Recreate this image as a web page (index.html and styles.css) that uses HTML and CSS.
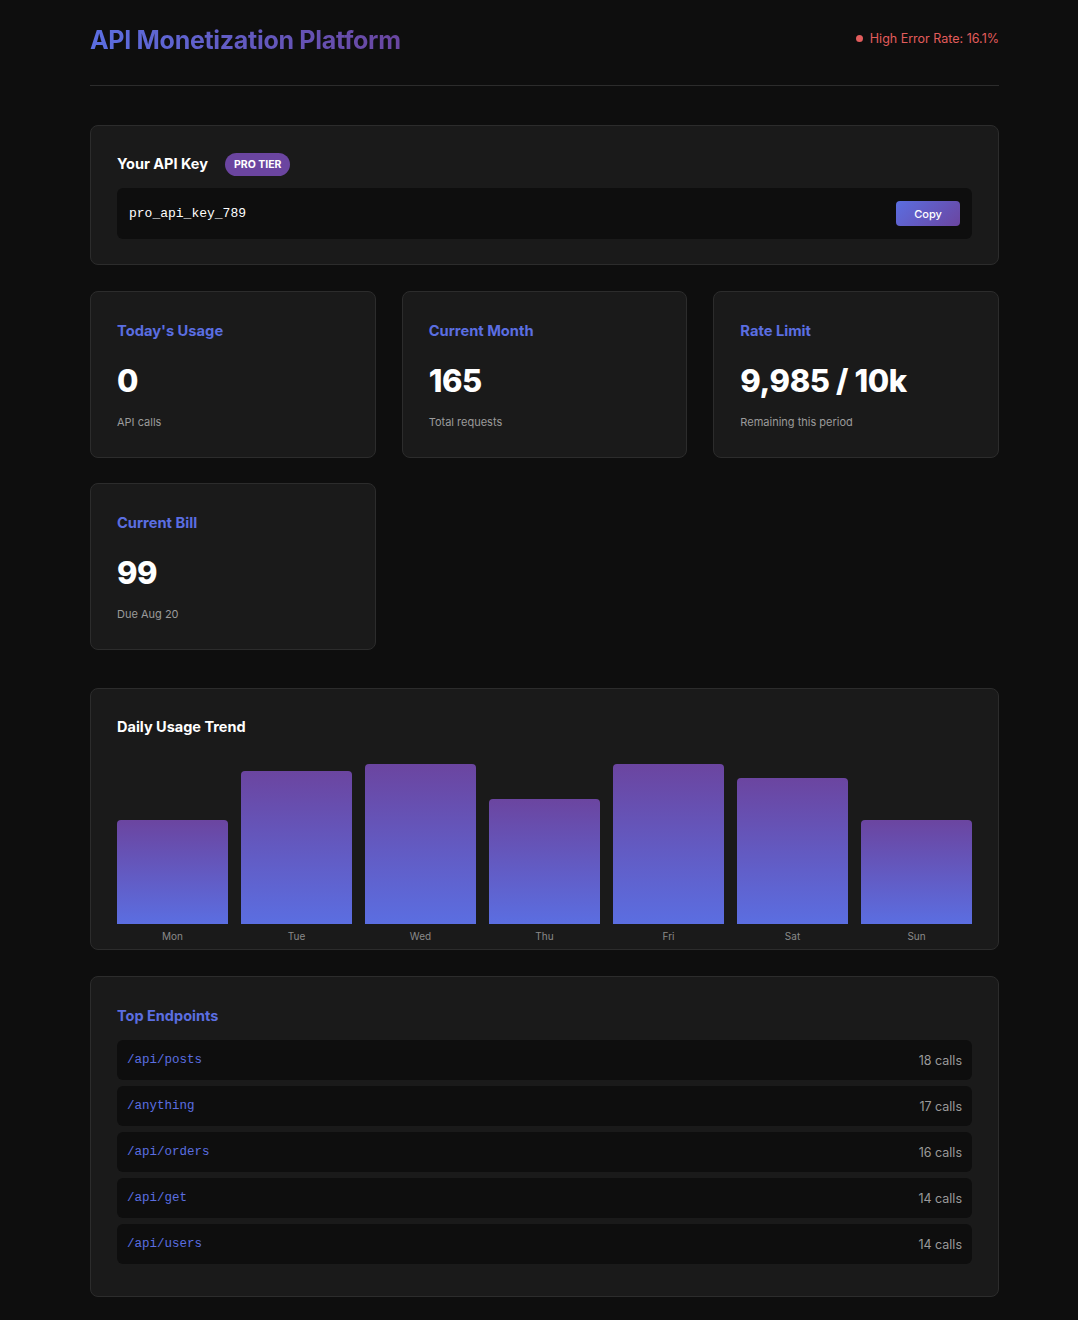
FILE: index.html
```html
<!DOCTYPE html>
<html lang="en">
<head>
<meta charset="utf-8">
<title>API Monetization Platform</title>
<link rel="stylesheet" href="styles.css">
</head>
<body>
<div class="container">
  <header class="header">
    <h1 class="brand">API Monetization Platform</h1>
    <div class="alert"><span class="dot"></span>High Error Rate: 16.1%</div>
  </header>

  <section class="card key-card">
    <div class="key-head">
      <h2 class="card-title white">Your API Key</h2>
      <span class="badge">PRO TIER</span>
    </div>
    <div class="key-box">
      <code class="key">pro_api_key_789</code>
      <button class="copy">Copy</button>
    </div>
  </section>

  <section class="stats">
    <div class="card stat">
      <h3 class="stat-title">Today's Usage</h3>
      <div class="stat-value">0</div>
      <div class="stat-sub">API calls</div>
    </div>
    <div class="card stat">
      <h3 class="stat-title">Current Month</h3>
      <div class="stat-value">165</div>
      <div class="stat-sub">Total requests</div>
    </div>
    <div class="card stat">
      <h3 class="stat-title">Rate Limit</h3>
      <div class="stat-value">9,985 / 10k</div>
      <div class="stat-sub">Remaining this period</div>
    </div>
    <div class="card stat">
      <h3 class="stat-title">Current Bill</h3>
      <div class="stat-value">99</div>
      <div class="stat-sub">Due Aug 20</div>
    </div>
  </section>

  <section class="card chart-card">
    <h2 class="card-title white">Daily Usage Trend</h2>
    <div class="bars">
      <div class="col"><div class="bar" style="height:104px"></div><span class="day">Mon</span></div>
      <div class="col"><div class="bar" style="height:153px"></div><span class="day">Tue</span></div>
      <div class="col"><div class="bar" style="height:160px"></div><span class="day">Wed</span></div>
      <div class="col"><div class="bar" style="height:125px"></div><span class="day">Thu</span></div>
      <div class="col"><div class="bar" style="height:160px"></div><span class="day">Fri</span></div>
      <div class="col"><div class="bar" style="height:146px"></div><span class="day">Sat</span></div>
      <div class="col"><div class="bar" style="height:104px"></div><span class="day">Sun</span></div>
    </div>
  </section>

  <section class="card endpoints">
    <h2 class="card-title blue">Top Endpoints</h2>
    <ul class="ep-list">
      <li class="ep"><code class="ep-path">/api/posts</code><span class="ep-count">18 calls</span></li>
      <li class="ep"><code class="ep-path">/anything</code><span class="ep-count">17 calls</span></li>
      <li class="ep"><code class="ep-path">/api/orders</code><span class="ep-count">16 calls</span></li>
      <li class="ep"><code class="ep-path">/api/get</code><span class="ep-count">14 calls</span></li>
      <li class="ep"><code class="ep-path">/api/users</code><span class="ep-count">14 calls</span></li>
    </ul>
  </section>
</div>
</body>
</html>
```
FILE: styles.css
```css
* { box-sizing: border-box; }
html, body { margin: 0; padding: 0; }
body {
  background: #0e0e0e;
  color: #fff;
  font-family: Inter, "Noto Sans", "Liberation Sans", sans-serif;
}
.container {
  width: 909px;
  margin-left: 90px;
  padding: 24px 0 23px;
}
.header {
  display: flex;
  justify-content: space-between;
  align-items: center;
  padding-bottom: 29px;
  border-bottom: 1px solid #2c2c2c;
}
.brand {
  margin: 0;
  font-size: 25px;
  line-height: 32px;
  font-weight: 700;
  letter-spacing: -0.3px;
  background: linear-gradient(90deg, #5b6ee1 0%, #6a46a0 100%);
  -webkit-background-clip: text;
  background-clip: text;
  color: transparent;
}
.alert {
  display: flex;
  align-items: center;
  gap: 7px;
  color: #e25c5c;
  font-size: 12.5px;
  margin-top: -3px;
}
.dot {
  width: 7px;
  height: 7px;
  border-radius: 50%;
  background: #e25c5c;
}
.card {
  background: #1a1a1a;
  border: 1px solid #2c2c2c;
  border-radius: 8px;
  padding: 26px;
}
.key-card {
  margin-top: 39px;
  padding-bottom: 25px;
}
.key-head {
  display: flex;
  align-items: center;
  gap: 17px;
  height: 23px;
}
.card-title {
  margin: 0;
  font-size: 14.5px;
  line-height: 22px;
  font-weight: 700;
}
.white { color: #fff; }
.blue { color: #5b6ee1; }
.badge {
  background: #6b45a0;
  color: #fff;
  font-size: 10.5px;
  font-weight: 700;
  padding: 0 9px;
  height: 23px;
  line-height: 23px;
  border-radius: 12px;
  margin-top: 2px;
}
.key-box {
  margin-top: 13px;
  background: #0e0e0e;
  border-radius: 6px;
  padding: 13px 12px;
  display: flex;
  justify-content: space-between;
  align-items: center;
}
.key {
  font-family: "Liberation Mono", "DejaVu Sans Mono", monospace;
  font-size: 13px;
  color: #fff;
}
.copy {
  border: 0;
  height: 25px;
  width: 64px;
  border-radius: 4px;
  background: linear-gradient(135deg, #5b6ee1, #6b45a0);
  color: #fff;
  font-family: inherit;
  font-size: 11px;
  font-weight: 500;
}
.stats {
  margin-top: 26px;
  display: grid;
  grid-template-columns: repeat(3, 1fr);
  gap: 25px 26px;
}
.stat {
  height: 167px;
  padding-top: 27px;
}
.stat-title {
  margin: 0;
  font-size: 14.7px;
  line-height: 24px;
  font-weight: 700;
  color: #5b6ee1;
}
.stat-value {
  margin-top: 18px;
  font-size: 31px;
  line-height: 40px;
  font-weight: 800;
  letter-spacing: -0.4px;
  color: #fff;
}
.stat-sub {
  margin-top: 13px;
  font-size: 11px;
  line-height: 16px;
  color: #9a9a9a;
}
.chart-card {
  margin-top: 38px;
  padding-top: 27px;
  padding-bottom: 6px;
}
.bars {
  display: flex;
  gap: 13px;
  height: 205px;
  align-items: flex-end;
}
.col {
  flex: 1;
  display: flex;
  flex-direction: column;
  align-items: stretch;
}
.bar {
  border-radius: 4px 4px 0 0;
  background: linear-gradient(180deg, #6b45a0 0%, #5b6ee1 100%);
}
.day {
  margin-top: 5px;
  text-align: center;
  font-size: 10px;
  line-height: 14px;
  color: #8a8a8a;
}
.endpoints {
  margin-top: 26px;
  padding-top: 28px;
}
.ep-list {
  list-style: none;
  margin: 13px 0 0;
  padding: 0;
}
.ep {
  display: flex;
  justify-content: space-between;
  align-items: center;
  height: 40px;
  padding: 0 10px;
  margin-bottom: 6px;
  background: #0e0e0e;
  border-radius: 6px;
}
.ep-path {
  font-family: "Liberation Mono", "DejaVu Sans Mono", monospace;
  font-size: 12.5px;
  color: #5b6ee1;
}
.ep-count {
  font-size: 12.5px;
  color: #9a9a9a;
}
```
